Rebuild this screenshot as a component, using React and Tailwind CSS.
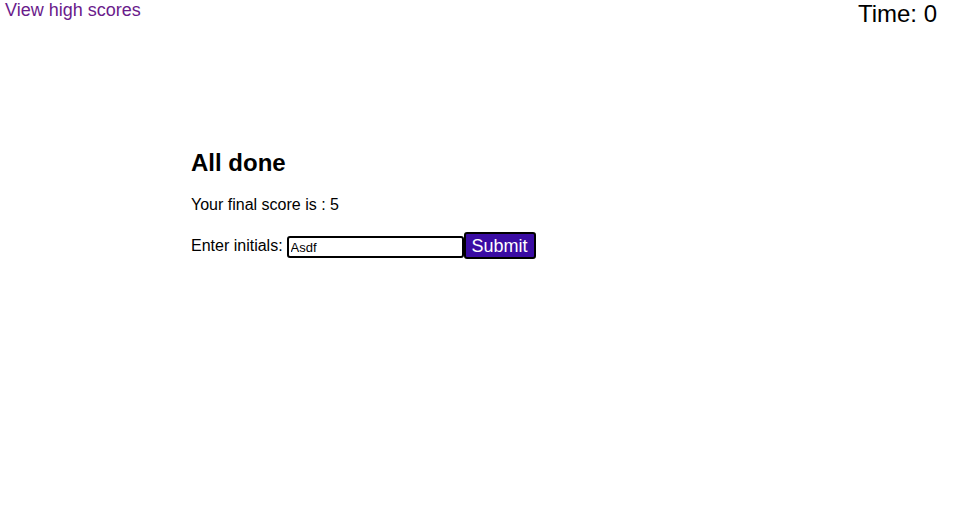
export default function App() {
  return (
    <div className="min-h-[508px] bg-white text-black font-['Liberation_Sans',Arial,sans-serif]">
      <header className="flex items-start justify-between pl-[5px] pr-[20px]">
        <a href="#" className="text-[18px] text-[#6a1b8b] leading-[21px]">
          View high scores
        </a>
        <div className="text-[24px] leading-[28px]">Time: 0</div>
      </header>

      <main className="w-[575px] mx-auto mt-[121px]">
        <h2 className="text-[24px] font-bold leading-[28px]">All done</h2>
        <p className="mt-[19px] text-[16px] leading-[18px]">Your final score is : 5</p>
        <form className="mt-[18px] flex items-end text-[16px]" onSubmit={(e) => e.preventDefault()}>
          <label htmlFor="initials" className="self-center mr-[4px] leading-[18px]">Enter initials:</label>
          <input
            id="initials"
            defaultValue="Asdf"
            className="w-[177px] h-[22px] mb-[1px] border-2 border-black rounded-[3px] px-[2px] text-[13px] outline-none"
          />
          <button
            type="submit"
            className="h-[27px] px-[6px] bg-[#3a0ca3] text-white text-[18px] leading-none border-2 border-black rounded-[3px]"
          >
            Submit
          </button>
        </form>
      </main>
    </div>
  );
}
